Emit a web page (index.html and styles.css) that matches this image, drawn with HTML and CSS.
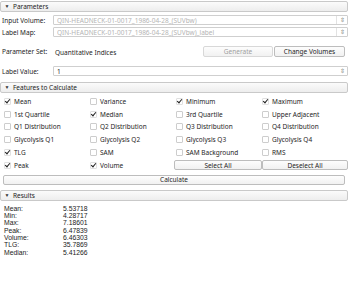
FILE: index.html
```html
<!DOCTYPE html>
<html>
<head>
<meta charset="utf-8">
<link rel="stylesheet" href="styles.css">
</head>
<body>
<div class="panel">
  <div class="hdr"><span class="tri">▼</span>Parameters</div>
  <div class="params">
    <div class="row">
      <span class="lbl">Input Volume:</span>
      <div class="combo dis"><span class="ctext">QIN-HEADNECK-01-0017_1986-04-28_(SUVbw)</span><span class="arr">⇳</span></div>
    </div>
    <div class="row">
      <span class="lbl">Label Map:</span>
      <div class="combo dis"><span class="ctext">QIN-HEADNECK-01-0017_1986-04-28_(SUVbw)_label</span><span class="arr">⇳</span></div>
    </div>
    <div class="row pset">
      <span class="lbl">Parameter Set:</span>
      <span class="pname">Quantitative Indices</span>
      <span class="btn dbtn gen">Generate</span>
      <span class="btn chg">Change Volumes</span>
    </div>
    <div class="row lv">
      <span class="lbl">Label Value:</span>
      <div class="combo spin"><span class="ctext">1</span><span class="arr">⇳</span></div>
    </div>
  </div>

  <div class="hdr"><span class="tri">▼</span>Features to Calculate</div>
  <div class="grid">
    <label class="cb on"><i></i>Mean</label>
    <label class="cb"><i></i>Variance</label>
    <label class="cb on"><i></i>Minimum</label>
    <label class="cb on"><i></i>Maximum</label>
    <label class="cb"><i></i>1st Quartile</label>
    <label class="cb on"><i></i>Median</label>
    <label class="cb"><i></i>3rd Quartile</label>
    <label class="cb"><i></i>Upper Adjacent</label>
    <label class="cb"><i></i>Q1 Distribution</label>
    <label class="cb"><i></i>Q2 Distribution</label>
    <label class="cb"><i></i>Q3 Distribution</label>
    <label class="cb"><i></i>Q4 Distribution</label>
    <label class="cb"><i></i>Glycolysis Q1</label>
    <label class="cb"><i></i>Glycolysis Q2</label>
    <label class="cb"><i></i>Glycolysis Q3</label>
    <label class="cb"><i></i>Glycolysis Q4</label>
    <label class="cb on"><i></i>TLG</label>
    <label class="cb"><i></i>SAM</label>
    <label class="cb"><i></i>SAM Background</label>
    <label class="cb"><i></i>RMS</label>
    <label class="cb on"><i></i>Peak</label>
    <label class="cb on"><i></i>Volume</label>
    <span class="btn gbtn">Select All</span>
    <span class="btn gbtn">Deselect All</span>
  </div>
  <div class="calcwrap"><span class="btn calc">Calculate</span></div>

  <div class="hdr rhdr"><span class="tri">▼</span>Results</div>
  <div class="results">
    <span>Mean:</span><span>5.53718</span>
    <span>Min:</span><span>4.28717</span>
    <span>Max:</span><span>7.18601</span>
    <span>Peak:</span><span>6.47839</span>
    <span>Volume:</span><span>6.46303</span>
    <span>TLG:</span><span>35.7869</span>
    <span>Median:</span><span>5.41266</span>
  </div>
</div>
</body>
</html>
```

FILE: styles.css
```css
html, body {
  margin: 0;
  padding: 0;
  background: #ffffff;
}
body {
  width: 350px;
  height: 294px;
  overflow: hidden;
  font-family: "Noto Sans", "Open Sans", sans-serif;
  font-size: 6.5px;
  color: #1e1e1e;
}
.panel {
  display: flex;
  flex-direction: column;
  padding: 1px 2px 0 0;
}
.hdr {
  height: 9px;
  line-height: 9px;
  border: 1px solid #c9c9c9;
  border-radius: 2px;
  background: linear-gradient(#fbfbfb, #ededed);
  display: flex;
  align-items: center;
  font-size: 6.5px;
  color: #222;
}
.tri {
  font-size: 5px;
  width: 12px;
  text-align: center;
  color: #333;
}
.params {
  display: flex;
  flex-direction: column;
  padding: 3px 0 6px 2px;
  gap: 2px;
}
.row {
  display: flex;
  align-items: center;
  height: 10px;
}
.lbl {
  width: 51px;
  flex: none;
}
.combo {
  flex: 1;
  height: 8px;
  border: 1px solid #cfcfcf;
  border-radius: 1px;
  background: #fff;
  display: flex;
  align-items: center;
  padding-left: 3px;
}
.combo .ctext {
  flex: 1;
  white-space: nowrap;
  overflow: hidden;
}
.combo.dis .ctext {
  color: #b4b4b4;
}
.arr {
  width: 10px;
  text-align: center;
  border-left: 1px solid #e2e2e2;
  font-size: 5.5px;
  color: #666;
  height: 8px;
  line-height: 8px;
}
.spin .arr {
  border-left: none;
}
.pset {
  height: 12px;
  margin-top: 6px;
}
.pname {
  flex: 1;
  padding-left: 2px;
  padding-top: 2px;
}
.btn {
  display: flex;
  align-items: center;
  justify-content: center;
  border: 1px solid #bdbdbd;
  border-radius: 2px;
  background: linear-gradient(#fdfdfd, #f1f1f1);
  box-sizing: border-box;
  color: #1e1e1e;
}
.gen {
  width: 70px;
  height: 11px;
  margin-right: 1px;
  border-color: #d8d8d8;
  color: #a0a0a0;
}
.chg {
  width: 71px;
  height: 11px;
  margin-right: 3px;
}
.lv {
  margin-top: 7px;
}
.grid {
  display: grid;
  grid-template-columns: 86px 86px 86px 86px;
  grid-auto-rows: 12.8px;
  padding: 2px 0 0 4px;
  align-items: center;
}
.cb {
  display: flex;
  align-items: center;
  white-space: nowrap;
}
.cb i {
  width: 5px;
  height: 5px;
  border: 1px solid #cdcdcd;
  border-radius: 1px;
  margin-right: 3px;
  background: #fff;
  display: inline-block;
  position: relative;
}
.cb.on i {
  border-color: #e0e0e0;
}
.cb.on i::after {
  content: "";
  position: absolute;
  left: 1px;
  top: -1px;
  width: 2px;
  height: 4px;
  border: solid #222;
  border-width: 0 1.2px 1.2px 0;
  transform: rotate(40deg);
}
.gbtn {
  height: 10px;
}
.grid .gbtn:first-of-type {
  margin-left: -2px;
}
.calcwrap {
  padding: 3px 3px 0 3px;
}
.calc {
  height: 10px;
}
.rhdr {
  margin-top: 5px;
}
.results {
  display: grid;
  grid-template-columns: 59px auto;
  justify-content: start;
  padding: 4px 0 0 4px;
  font-family: "Liberation Sans", Arial, sans-serif;
  font-size: 6.8px;
  line-height: 7.3px;
  color: #1a1a1a;
}
```
